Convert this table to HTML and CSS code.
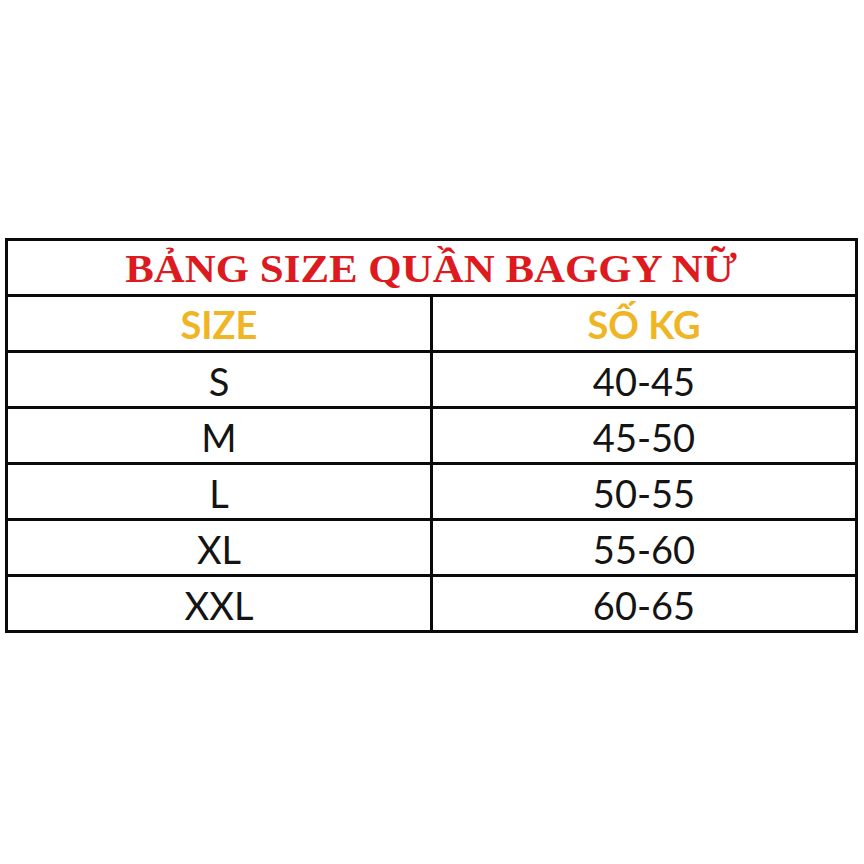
FILE: index.html
```html
<!DOCTYPE html>
<html lang="vi">
<head>
<meta charset="utf-8">
<title>Bảng size quần baggy nữ</title>
<link rel="stylesheet" href="styles.css">
</head>
<body>
<div class="size-table">
  <div class="cell title"><span class="title-text">BẢNG SIZE QUẦN BAGGY NỮ</span></div>
  <div class="cell head">SIZE</div>
  <div class="cell head">SỐ KG</div>
  <div class="cell">S</div>
  <div class="cell">40-45</div>
  <div class="cell">M</div>
  <div class="cell">45-50</div>
  <div class="cell">L</div>
  <div class="cell">50-55</div>
  <div class="cell">XL</div>
  <div class="cell">55-60</div>
  <div class="cell">XXL</div>
  <div class="cell">60-65</div>
</div>
</body>
</html>
```
FILE: styles.css
```css
html, body {
  margin: 0;
  padding: 0;
  background: #ffffff;
}

body {
  width: 864px;
  height: 864px;
  padding-top: 238px;
  box-sizing: border-box;
}

.size-table {
  margin-left: 5px;
  width: 853px;
  display: grid;
  grid-template-columns: 1fr 1fr;
  grid-auto-rows: 56px;
  border-left: 3px solid #0a0a0a;
  border-top: 3px solid #0a0a0a;
  box-sizing: border-box;
}

.cell {
  border-right: 3px solid #0a0a0a;
  border-bottom: 3px solid #0a0a0a;
  display: flex;
  align-items: center;
  justify-content: center;
  font-family: Lato, "Noto Sans", sans-serif;
  font-size: 38px;
  color: #141414;
  padding-top: 2px;
  box-sizing: border-box;
}

.title {
  grid-column: 1 / span 2;
  padding-top: 2px;
}

.title-text {
  display: inline-block;
  font-family: "Liberation Serif", "Times New Roman", serif;
  font-weight: bold;
  font-size: 39px;
  color: #dc1a20;
  transform: scaleX(1.1);
}

.head {
  font-weight: bold;
  color: #efb524;
  padding-top: 0;
}
```
